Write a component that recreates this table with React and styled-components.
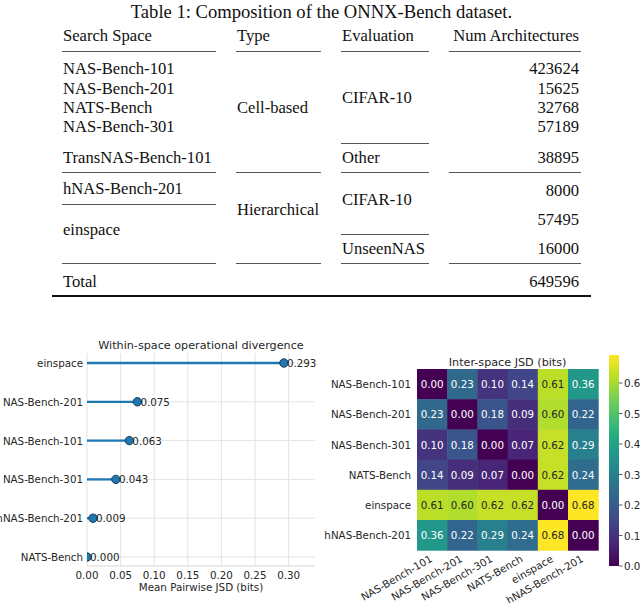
import React from "react";
import styled, { createGlobalStyle } from "styled-components";

const GlobalStyle = createGlobalStyle`
  html, body {
    margin: 0;
    padding: 0;
    background: #fff;
  }
`;

const tableRows = [
  // search space column
  { col: 1, row: 2, text: ["NAS-Bench-101", "NAS-Bench-201", "NATS-Bench", "NAS-Bench-301"] },
  { col: 1, row: 3, text: ["TransNAS-Bench-101"], rule: true },
  { col: 1, row: 4, text: ["hNAS-Bench-201"], rule: true },
  { col: 1, row: 5, span: 2, text: ["einspace"], rule: true, pb: 9 },
  { col: 1, row: 7, text: ["Total"], pt: 4 },
  // type column
  { col: 2, row: 2, span: 2, text: ["Cell-based"], rule: true, pb: 9 },
  { col: 2, row: 4, span: 3, text: ["Hierarchical"], rule: true, pb: 17 },
  // evaluation column
  { col: 3, row: 2, text: ["CIFAR-10"], rule: true },
  { col: 3, row: 3, text: ["Other"], rule: true },
  { col: 3, row: 4, span: 2, text: ["CIFAR-10"], rule: true, pb: 8 },
  { col: 3, row: 6, text: ["UnseenNAS"], rule: true },
  // num column
  { col: 4, row: 2, text: ["423624", "15625", "32768", "57189"], right: true },
  { col: 4, row: 3, text: ["38895"], right: true, rule: true },
  { col: 4, row: 4, text: ["8000"], right: true, pt: 3 },
  { col: 4, row: 5, text: ["57495"], right: true },
  { col: 4, row: 6, text: ["16000"], right: true, rule: true },
  { col: 4, row: 7, text: ["649596"], right: true, pt: 4 },
];

const headers = ["Search Space", "Type", "Evaluation", "Num Architectures"];

const lollipop = [
  ["einspace", 0.293],
  ["NAS-Bench-201", 0.075],
  ["NAS-Bench-101", 0.063],
  ["NAS-Bench-301", 0.043],
  ["hNAS-Bench-201", 0.009],
  ["NATS-Bench", 0.0],
];

const spaces = ["NAS-Bench-101", "NAS-Bench-201", "NAS-Bench-301", "NATS-Bench", "einspace", "hNAS-Bench-201"];

const jsd = [
  [0.0, 0.23, 0.1, 0.14, 0.61, 0.36],
  [0.23, 0.0, 0.18, 0.09, 0.6, 0.22],
  [0.1, 0.18, 0.0, 0.07, 0.62, 0.29],
  [0.14, 0.09, 0.07, 0.0, 0.62, 0.24],
  [0.61, 0.6, 0.62, 0.62, 0.0, 0.68],
  [0.36, 0.22, 0.29, 0.24, 0.68, 0.0],
];

const viridis = [
  "#440154", "#482475", "#414487", "#355f8d", "#2a788e", "#21918c",
  "#22a884", "#44bf70", "#7ad151", "#bddf26", "#fde725",
];

const hex = (h) => [1, 3, 5].map((i) => parseInt(h.slice(i, i + 2), 16));

const colormap = (t) => {
  const v = Math.max(0, Math.min(1, t)) * 10;
  const i = Math.min(9, Math.floor(v));
  const f = v - i;
  const a = hex(viridis[i]);
  const b = hex(viridis[i + 1]);
  const c = a.map((x, k) => Math.round(x + (b[k] - x) * f));
  return `rgb(${c[0]},${c[1]},${c[2]})`;
};

const VMAX = 0.68;

const Page = styled.div`
  width: 640px;
  height: 603px;
  overflow: hidden;
  display: flex;
  flex-direction: column;
  align-items: center;
  background: #fff;
`;

const Caption = styled.div`
  margin-top: 2px;
  margin-left: 3px;
  font-family: "Liberation Serif", "Times New Roman", serif;
  font-size: 18.6px;
  line-height: 20px;
  color: #111;
  text-align: center;
  white-space: nowrap;
`;

const TableWrap = styled.div`
  margin-left: 3px;
  padding: 0 10px;
  border-bottom: 2px solid #111;
`;

const TableGrid = styled.div`
  display: grid;
  grid-template-columns: 154px 85px 88px 132px;
  grid-template-rows: 30px 92px 29px 32px 30px 29px 31px;
  column-gap: 20px;
  font-family: "Liberation Serif", "Times New Roman", serif;
  font-size: 16.6px;
  color: #111;
`;

const Cell = styled.div`
  grid-column: ${(p) => p.$col};
  grid-row: ${(p) => p.$row} / span ${(p) => p.$span || 1};
  display: flex;
  flex-direction: column;
  justify-content: ${(p) => (p.$head ? "flex-end" : "center")};
  align-items: ${(p) => (p.$right ? "flex-end" : "flex-start")};
  padding: ${(p) => p.$pt || 0}px 2px ${(p) => p.$pb || 0}px 1px;
  border-bottom: ${(p) => (p.$rule ? "1px solid #555" : "none")};
  line-height: 19.3px;
  white-space: nowrap;
`;

const ChartRow = styled.div`
  margin-top: 38px;
  width: 640px;
  height: 268px;
  display: flex;
`;

const Panel = styled.div`
  width: 320px;
  height: 268px;
  flex: none;
`;

const Label = styled.text`
  font-family: "DejaVu Sans", "Liberation Sans", sans-serif;
  font-size: ${(p) => p.$size || 10.3}px;
  fill: ${(p) => p.$fill || "#262626"};
`;

const GRID = "#e3e3e3";
const BLUE = "#1f77b4";

const LollipopChart = () => {
  const x0 = 87;
  const xs = 672;
  const top = 18;
  const bottom = 231;
  const right = 315;
  const ys = lollipop.map((_, i) => 28 + i * 38.8);
  const ticks = [0, 0.05, 0.1, 0.15, 0.2, 0.25, 0.3];
  return (
    <svg width="320" height="268" viewBox="0 0 320 268">
      <defs>
        <clipPath id="plotArea">
          <rect x={x0} y={top} width={right - x0} height={bottom - top} />
        </clipPath>
      </defs>
      <Label x="201" y="14" $size={11.2} textAnchor="middle">
        Within-space operational divergence
      </Label>
      {ticks.map((t) => (
        <line key={t} x1={x0 + t * xs} x2={x0 + t * xs} y1={top} y2={bottom} stroke={GRID} strokeWidth="1" />
      ))}
      {ys.map((y, i) => (
        <line key={i} x1={x0} x2={right} y1={y} y2={y} stroke={GRID} strokeWidth="1" />
      ))}
      <line x1={x0} x2={right} y1={bottom} y2={bottom} stroke="#d6d6d6" strokeWidth="1" />
      {lollipop.map(([name, v], i) => (
        <g key={name}>
          <g clipPath="url(#plotArea)">
            <line x1={x0} x2={x0 + v * xs} y1={ys[i]} y2={ys[i]} stroke={BLUE} strokeWidth="2.3" />
            <circle cx={x0 + v * xs} cy={ys[i]} r="4.2" fill={BLUE} stroke="#1d3c57" strokeWidth="1" />
          </g>
          <Label x={x0 + v * xs + 3} y={ys[i] + 4}>
            {v.toFixed(3)}
          </Label>
          <Label x="83" y={ys[i] + 4} textAnchor="end">
            {name}
          </Label>
        </g>
      ))}
      {ticks.map((t) => (
        <Label key={t} x={x0 + t * xs} y="244" textAnchor="middle">
          {t.toFixed(2)}
        </Label>
      ))}
      <Label x="201" y="256" textAnchor="middle">
        Mean Pairwise JSD (bits)
      </Label>
    </svg>
  );
};

const Heatmap = () => {
  const x0 = 97;
  const y0 = 34;
  const size = 30.2;
  const cbTop = 20;
  const cbBottom = 231;
  const perUnit = 305;
  return (
    <svg width="320" height="268" viewBox="0 0 320 268">
      <defs>
        <linearGradient id="viridis" x1="0" y1="1" x2="0" y2="0">
          {viridis.map((c, i) => (
            <stop key={c} offset={`${i * 10}%`} stopColor={c} />
          ))}
        </linearGradient>
      </defs>
      <Label x={x0 + size * 3} y="31" $size={11.2} textAnchor="middle">
        Inter-space JSD (bits)
      </Label>
      {jsd.map((row, r) =>
        row.map((v, c) => (
          <g key={`${r}-${c}`}>
            <rect x={x0 + c * size} y={y0 + r * size} width={size + 0.5} height={size + 0.5} fill={colormap(v / VMAX)} />
            <Label
              x={x0 + c * size + size / 2}
              y={y0 + r * size + size / 2 + 4}
              textAnchor="middle"
              $fill={v / VMAX > 0.6 ? "#262626" : "#ffffff"}
            >
              {v.toFixed(2)}
            </Label>
          </g>
        ))
      )}
      {spaces.map((name, r) => (
        <Label key={name} x="91" y={y0 + r * size + size / 2 + 4} textAnchor="end">
          {name}
        </Label>
      ))}
      {spaces.map((name, c) => {
        const ax = x0 + c * size + size / 2 + 1;
        const ay = 226;
        return (
          <Label key={name} x={ax} y={ay} textAnchor="end" transform={`rotate(-30 ${ax} ${ay})`}>
            {name}
          </Label>
        );
      })}
      <rect x="289" y={cbTop} width="10" height={cbBottom - cbTop} fill="url(#viridis)" />
      {[0, 0.1, 0.2, 0.3, 0.4, 0.5, 0.6].map((t) => (
        <g key={t}>
          <line x1="299" x2="302.5" y1={cbBottom - t * perUnit} y2={cbBottom - t * perUnit} stroke="#333" strokeWidth="0.8" />
          <Label x="304" y={cbBottom - t * perUnit + 4}>
            {t.toFixed(1)}
          </Label>
        </g>
      ))}
    </svg>
  );
};

const App = () => {
  return (
    <Page>
      <GlobalStyle />
      <Caption>Table 1: Composition of the ONNX-Bench dataset.</Caption>
      <TableWrap>
        <TableGrid>
          {headers.map((h, i) => (
            <Cell key={h} $col={i + 1} $row={1} $head $rule $pb={6} $right={i === 3}>
              {h}
            </Cell>
          ))}
          {tableRows.map((c, i) => (
            <Cell
              key={i}
              $col={c.col}
              $row={c.row}
              $span={c.span}
              $rule={c.rule}
              $right={c.right}
              $pt={c.pt}
              $pb={c.pb}
            >
              {c.text.map((t) => (
                <span key={t}>{t}</span>
              ))}
            </Cell>
          ))}
        </TableGrid>
      </TableWrap>
      <ChartRow>
        <Panel>
          <LollipopChart />
        </Panel>
        <Panel>
          <Heatmap />
        </Panel>
      </ChartRow>
    </Page>
  );
};

export default App;
